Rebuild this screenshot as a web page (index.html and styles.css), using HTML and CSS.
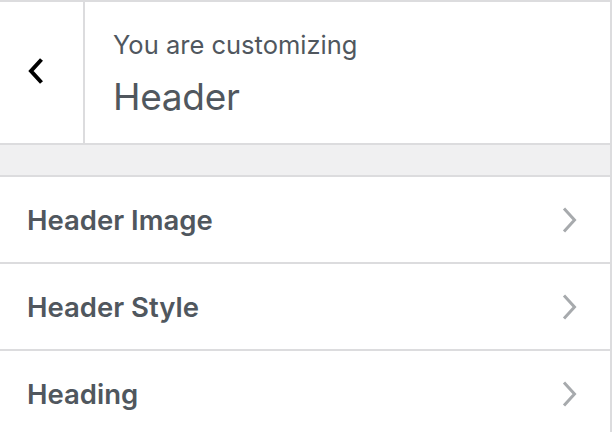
FILE: index.html
```html
<!DOCTYPE html>
<html>
<head>
<meta charset="utf-8">
<link rel="stylesheet" href="styles.css">
</head>
<body>
<div class="panel">
  <div class="head">
    <button class="back" aria-label="Back">
      <svg width="20" height="28" viewBox="0 0 20 28"><path d="M15.5 2.5 L5 14 L15.5 25.5" fill="none" stroke="#000" stroke-width="4"/></svg>
    </button>
    <div class="title">
      <span class="action">You are customizing</span>
      <h2 class="name">Header</h2>
    </div>
  </div>
  <div class="spacer"></div>
  <ul class="sections">
    <li class="row"><h3>Header Image</h3><svg class="chev" width="18" height="28" viewBox="0 0 18 28"><path d="M4 2.5 L14.5 14 L4 25.5" fill="none" stroke="#a7aaad" stroke-width="3"/></svg></li>
    <li class="row"><h3>Header Style</h3><svg class="chev" width="18" height="28" viewBox="0 0 18 28"><path d="M4 2.5 L14.5 14 L4 25.5" fill="none" stroke="#a7aaad" stroke-width="3"/></svg></li>
    <li class="row"><h3>Heading</h3><svg class="chev" width="18" height="28" viewBox="0 0 18 28"><path d="M4 2.5 L14.5 14 L4 25.5" fill="none" stroke="#a7aaad" stroke-width="3"/></svg></li>
  </ul>
</div>
</body>
</html>
```
FILE: styles.css
```css
html, body { margin: 0; padding: 0; background: #fff; }
body { font-family: Inter, "Liberation Sans", Arial, sans-serif; color: #50575e; }
.panel {
  width: 610px;
  height: 430px;
  border-top: 2px solid #dcdcde;
  border-right: 2px solid #dcdcde;
  overflow: hidden;
}
.head {
  display: flex;
  height: 141px;
  border-bottom: 2px solid #dcdcde;
}
.back {
  width: 85px;
  flex: none;
  border: 0;
  border-right: 2px solid #dcdcde;
  background: #fff;
  padding: 0;
  display: flex;
  align-items: center;
  justify-content: center;
}
.back svg { display: block; margin-right: 12px; margin-bottom: 4px; }
.title {
  padding: 28px 0 0 28px;
  display: flex;
  flex-direction: column;
}
.action { font-size: 25.5px; line-height: 30px; color: #50575e; }
.name { margin: 16px 0 0; font-size: 37px; font-weight: 400; line-height: 42px; color: #50575e; letter-spacing: -0.3px; }
.spacer { height: 30px; background: #f0f0f1; border-bottom: 2px solid #dcdcde; }
.sections { list-style: none; margin: 0; padding: 0; }
.row {
  height: 85px;
  display: flex;
  align-items: center;
  justify-content: space-between;
  padding: 0 32px 0 27px;
  border-bottom: 2px solid #dcdcde;
}
.row h3 { margin: 0; font-size: 27.5px; font-weight: 600; color: #50575e; line-height: 34px; }
.chev { display: block; }
```
